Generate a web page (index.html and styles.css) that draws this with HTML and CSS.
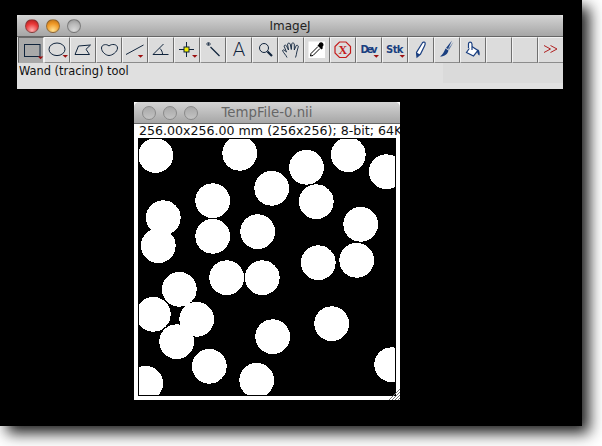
FILE: index.html
```html
<!DOCTYPE html>
<html lang="en">
<head>
    <meta charset="UTF-8">
    <title>ImageJ</title>
    <link rel="stylesheet" href="styles.css">
</head>
<body>
    <div class="desktop">

        <div class="window main-window">
            <div class="titlebar">
                <span class="light red"></span>
                <span class="light orange"></span>
                <span class="light grey"></span>
                <span class="title">ImageJ</span>
            </div>
            <div class="toolbar">
                <div class="tool pressed">
                    <svg viewBox="0 0 26 26"><rect class="ink" x="6.500" y="7.500" width="15.500" height="12"/><path class="menu" d="M19.800 19.500h5.500l-2.700 2.700z"/></svg>
                </div>
                <div class="tool">
                    <svg viewBox="0 0 26 26"><ellipse class="ink" cx="13" cy="12.300" rx="8" ry="6.300"/><path class="menu" d="M18.500 18h5.500l-2.700 2.700z"/></svg>
                </div>
                <div class="tool">
                    <svg viewBox="0 0 26 26"><path class="ink" d="M5 17.500 8.500 9 20.500 8 16 12.300 19.500 17.500z"/></svg>
                </div>
                <div class="tool">
                    <svg viewBox="0 0 26 26"><path class="ink" d="M5.500 11C5.500 7.500 10.500 6.500 13 9 15.500 6.500 21.500 7 21.500 11 21.500 15 16 18.500 13 18.500 10 18.500 5.500 15 5.500 11z"/></svg>
                </div>
                <div class="tool">
                    <svg viewBox="0 0 26 26"><path class="ink" d="M4 17.500 21.500 8"/><path class="menu" d="M15.800 18h5.500l-2.700 2.700z"/></svg>
                </div>
                <div class="tool">
                    <svg viewBox="0 0 26 26"><path class="ink" d="M15.500 7 5 17.500H20.500M12 11.500C13.500 13 14.500 15 14.500 17"/></svg>
                </div>
                <div class="tool">
                    <svg viewBox="0 0 26 26"><path class="ink" d="M5 12.500H20M12.500 5V20"/><rect x="10" y="10" width="5" height="5" fill="#f4f000" stroke="#10243c"/><path class="menu" d="M18 18h5.500l-2.700 2.700z"/></svg>
                </div>
                <div class="tool">
                    <svg viewBox="0 0 26 26"><path class="ink wand" d="M10.500 10 19.500 19"/><path class="ink thin" d="M6.500 7 8.500 5 10.500 7 8.500 9z"/><path class="ink thin" d="M8 6.500h1v1h-1z"/></svg>
                </div>
                <div class="tool">
                    <svg viewBox="0 0 26 26"><text class="letter" x="13" y="19" text-anchor="middle">A</text></svg>
                </div>
                <div class="tool">
                    <svg viewBox="0 0 26 26"><circle class="ink" cx="12" cy="11" r="4.500"/><path class="ink thick" d="M15.500 14.500 20 19"/></svg>
                </div>
                <div class="tool">
                    <svg viewBox="0 0 26 26"><path class="ink hand" d="M9 20.500C8 18 5.500 16 4.500 13.500 5 12.300 6.500 12.800 8.500 15L6 9C6.500 7.800 8 8 8.500 8.800L10.500 13 9.500 7C10 5.800 11.700 5.800 12.200 7L13.300 12.500 13.800 6.500C14.800 5.500 16 6 16.300 7L16.300 13 18.200 8.500C19.200 8 20.500 8.500 20.300 9.700L18.800 15C18.800 17 18 18.500 17.500 20.500"/></svg>
                </div>
                <div class="tool">
                    <svg viewBox="0 0 26 26"><rect x="4.500" y="4.500" width="16.500" height="16.500" fill="#fff"/><path d="M15 6.500C16 5 18 5 19 6.200 20 7.500 19.500 9 18.300 10L19 11 17.500 12.500 13.500 8.500 15 7z" fill="#000"/><path d="M14 9.500 7 16.500 6.500 19 9 18.500 16 11.500" fill="#fff" stroke="#000"/></svg>
                </div>
                <div class="tool">
                    <svg viewBox="0 0 26 26"><path class="stop" d="M9.500 5H16L20.500 9.500V16L16 20.500H9.500L5 16V9.500z"/><text class="stop-x" x="12.800" y="17" text-anchor="middle">X</text></svg>
                </div>
                <div class="tool">
                    <svg viewBox="0 0 26 26"><text class="label" x="4.500" y="15.500" textLength="17">Dev</text><path class="menu" d="M17.500 18h5.500l-2.700 2.700z"/></svg>
                </div>
                <div class="tool">
                    <svg viewBox="0 0 26 26"><text class="label" x="4" y="15.500" textLength="17.500">Stk</text><path class="menu" d="M17.500 18h5.500l-2.700 2.700z"/></svg>
                </div>
                <div class="tool">
                    <svg viewBox="0 0 26 26"><path class="blue" d="M14 6.500C14.700 5 16.500 4.700 17 5.500 17.500 6.500 17 8 16.500 9L12.500 17 9 20 8.500 15.500z"/><path d="M8.500 15.500 9 20 12 17.500z" fill="#1a3f80"/></svg>
                </div>
                <div class="tool">
                    <svg viewBox="0 0 26 26"><path d="M18 3.500 14 12 12 11z" fill="#1a3f80"/><path d="M19.500 5 15 13 14 12z" fill="#5a78a8"/><path d="M11.500 11.500 14.500 13.500C13.500 17 11 19.500 6 19.500 8.500 18 10 15 11.500 11.500z" fill="#1a3f80"/></svg>
                </div>
                <div class="tool">
                    <svg viewBox="0 0 26 26"><path class="blue" d="M11 9 18 13.500 13.500 19 6.500 15.500z"/><path class="blue" d="M8.500 11V7C8.500 4.500 11.500 4.500 12 7V13"/><path d="M18 12.500C19.500 13.500 20 16 19.500 18.500 18 18 17.500 16 17 14.500z" fill="#1a3f80"/></svg>
                </div>
                <div class="tool"></div>
                <div class="tool"></div>
                <div class="tool">
                    <svg viewBox="0 0 26 26"><path class="more" d="M6 8.500 12.500 12 6 15.500M12.500 8.500 19 12 12.500 15.500"/></svg>
                </div>
            </div>
            <div class="status">
                <span class="status-text">Wand (tracing) tool</span>
                <div class="memory"></div>
            </div>
        </div>

        <div class="window image-window">
            <div class="titlebar">
                <span class="light off"></span>
                <span class="light off"></span>
                <span class="light off"></span>
                <span class="title faded">TempFile-0.nii</span>
            </div>
            <div class="info">256.00x256.00 mm (256x256); 8-bit; 64K</div>
            <div class="canvas">
                <svg class="blobs" viewBox="1 1 256 256" shape-rendering="crispEdges" fill="#fff">
                    <circle cx="17.700" cy="17.500" r="17.400"/>
                    <circle cx="101.700" cy="15.300" r="17.400"/>
                    <circle cx="133.700" cy="50.300" r="17.400"/>
                    <circle cx="74.700" cy="62.700" r="17.400"/>
                    <circle cx="25.300" cy="79.700" r="17.400"/>
                    <circle cx="20.300" cy="107.700" r="17.400"/>
                    <circle cx="74.700" cy="98.300" r="17.400"/>
                    <circle cx="119.700" cy="93.700" r="17.400"/>
                    <circle cx="168.500" cy="29.300" r="17.400"/>
                    <circle cx="210.300" cy="16.700" r="17.400"/>
                    <circle cx="248.300" cy="33.700" r="17.400"/>
                    <circle cx="178.300" cy="63.700" r="17.400"/>
                    <circle cx="222.700" cy="86.300" r="17.400"/>
                    <circle cx="180.300" cy="124.700" r="17.400"/>
                    <circle cx="218.700" cy="122.300" r="17.400"/>
                    <circle cx="41.300" cy="151.300" r="17.400"/>
                    <circle cx="88.700" cy="139.700" r="17.400"/>
                    <circle cx="124.300" cy="139.700" r="17.400"/>
                    <circle cx="15.300" cy="176.300" r="17.400"/>
                    <circle cx="58.700" cy="181.300" r="17.400"/>
                    <circle cx="38.700" cy="203.700" r="17.400"/>
                    <circle cx="71.300" cy="228.300" r="17.400"/>
                    <circle cx="134.700" cy="198.700" r="17.400"/>
                    <circle cx="118.700" cy="242.300" r="17.400"/>
                    <circle cx="7.700" cy="245.300" r="17.400"/>
                    <circle cx="193.700" cy="185.700" r="17.400"/>
                    <circle cx="253.700" cy="226.700" r="17.400"/>
                </svg>
            </div>
            <svg class="grip" viewBox="0 0 12 12">
                <path d="M1 12 12 1M4 12 12 4M7 12 12 7M10 12 12 10" stroke="#777" fill="none"/>
            </svg>
        </div>

    </div>
</body>
</html>
```

FILE: styles.css
```css
html, body {
    margin: 0;
    background-color: #fff;
}
body {
    width: 602px;
    height: 446px;
    overflow: hidden;
}
.desktop {
    position: relative;
    width: 582px;
    height: 426px;
    background-color: #000;
    box-shadow: 7px 7px 14px rgba(0, 0, 0, 0.9);
}

/* windows */
.window {
    position: absolute;
    font-family: "DejaVu Sans", sans-serif;
}
.main-window {
    left: 17px;
    top: 15px;
    width: 546px;
    height: 74px;
    display: flex;
    flex-direction: column;
    background-color: #e0e0e0;
}
.image-window {
    left: 134px;
    top: 102px;
    width: 266px;
    height: 298px;
    display: flex;
    flex-direction: column;
    background-color: #fff;
}
.titlebar {
    height: 21px;
    flex: none;
    display: flex;
    align-items: center;
    gap: 7px;
    padding-left: 8px;
    border-radius: 5px 5px 0 0;
    border-bottom: 1px solid #666;
    background: linear-gradient(#d4d4d4, #a6a6a6);
    position: relative;
}
.title {
    position: absolute;
    left: 0;
    right: 0;
    top: 3px;
    text-align: center;
    font-size: 12px;
    line-height: 16px;
    color: #222;
}
.title.faded {
    font-size: 13.3px;
    color: #666;
}

/* traffic lights */
.light {
    width: 14px;
    height: 14px;
    border-radius: 50%;
    flex: none;
    box-sizing: border-box;
    border: 1px solid rgba(70, 70, 70, 0.5);
}
.red {
    background: radial-gradient(circle at 50% 85%, #ffb0b0, #e83838 55%, #a81818);
}
.orange {
    background: radial-gradient(circle at 50% 85%, #ffe090, #f09a28 55%, #b86a10);
}
.grey {
    background: radial-gradient(circle at 50% 85%, #d8d8d8, #b8b8b8 55%, #909090);
}
.off {
    background: linear-gradient(#a8a8a8, #c4c4c4);
    border-color: #8a8a8a;
}

/* toolbar */
.toolbar {
    display: flex;
    height: 26px;
    flex: none;
    padding-left: 1px;
    overflow: hidden;
}
.tool {
    width: 26px;
    height: 26px;
    flex: none;
    box-sizing: border-box;
    background-color: #dcdcdc;
    border-top: 1px solid #f2f2f2;
    border-left: 1px solid #f2f2f2;
    border-right: 1px solid #707070;
    border-bottom: 1px solid #8c8c8c;
}
.tool.pressed {
    background-color: #a9a9a9;
    border-color: #6a6a6a #f0f0f0 #a9a9a9 #6a6a6a;
}
.tool svg {
    display: block;
    width: 26px;
    height: 26px;
    margin: -1px;
}
.ink {
    fill: none;
    stroke: #10243c;
    stroke-width: 1;
}
.ink.thin {
    stroke-width: 0.8;
}
.ink.thick {
    stroke-width: 2.2;
}
.ink.wand {
    stroke-width: 1.2;
}
.ink.hand {
    stroke-width: 0.9;
}
.menu {
    fill: #9c1010;
}
.letter {
    font-family: "DejaVu Sans", sans-serif;
    font-weight: 200;
    font-size: 19px;
    fill: #10243c;
}
.stop {
    fill: none;
    stroke: #c41c1c;
    stroke-width: 1.2;
}
.stop-x {
    font-family: "Liberation Serif", serif;
    font-size: 12px;
    font-weight: bold;
    fill: #c41c1c;
}
.label {
    font-family: "DejaVu Sans", sans-serif;
    font-size: 10px;
    font-weight: bold;
    fill: #1a3f80;
}
.blue {
    fill: #fff;
    stroke: #1a3f80;
    stroke-width: 1.2;
}
.more {
    fill: none;
    stroke: #b02020;
    stroke-width: 1;
}

/* status line */
.status {
    flex: 1;
    display: flex;
    justify-content: space-between;
    align-items: flex-start;
}
.status-text {
    padding: 1px 0 0 2px;
    font-size: 11.4px;
    line-height: 15px;
    color: #111;
}
.memory {
    width: 120px;
    height: 20px;
    background-color: #dadada;
}

/* image window */
.info {
    height: 14px;
    flex: none;
    padding-left: 5px;
    font-size: 12.6px;
    line-height: 14px;
    color: #111;
    white-space: nowrap;
    overflow: hidden;
}
.canvas {
    height: 256px;
    margin: 0 4px;
    border: 1px solid #000;
    background-color: #000;
    overflow: hidden;
}
.blobs {
    display: block;
    width: 256px;
    height: 256px;
}
.grip {
    position: absolute;
    right: 0;
    bottom: 0;
    width: 12px;
    height: 12px;
}
```
